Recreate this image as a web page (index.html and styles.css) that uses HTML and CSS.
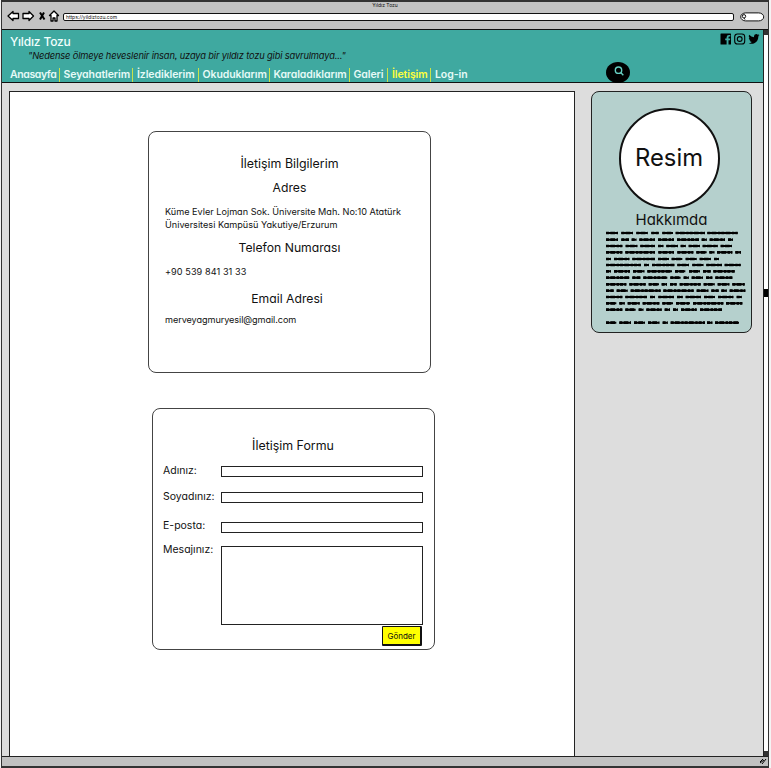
FILE: index.html
```
<!DOCTYPE html>
<html lang="tr">
<head>
<meta charset="utf-8">
<title>Yıldız Tozu</title>
<link rel="stylesheet" href="styles.css">
</head>
<body>
<div class="window">
  <div class="chrome">
    <div class="chrome-title">Yıldız Tozu</div>
    <div class="toolbar">
      <svg class="nav-icons" viewBox="0 0 54 14" width="54" height="14">
        <path d="M1 7 6 2.500V4.500h5.500v5H6v2Z M26.500 7 22 2.500V4.500h-6v5h6v2Z M42.500 6.500 47 2l4.500 4.500H50V12h-2V9h-2v3h-2V6.500Z"/>
        <path class="stop" d="M33 3.500 37.500 10.500M37 3.500 33 10.500"/>
      </svg>
      <div class="url">https://yildiztozu.com</div>
      <svg class="finder" viewBox="0 0 25 10" width="25" height="10">
        <rect x=".7" y=".9" width="23" height="8" rx="5"/>
        <circle cx="4" cy="4.300" r="1.700"/><path d="M4 6 5 7.500"/>
      </svg>
    </div>
  </div>
  <div class="view">
    <div class="page">
      <header class="header">
        <div class="brand">Yıldız Tozu</div>
        <div class="motto">"Nedense ölmeye heveslenir insan, uzaya bir yıldız tozu gibi savrulmaya..."</div>
        <nav class="menu">
          <a>Anasayfa</a><a>Seyahatlerim</a><a>İzlediklerim</a><a>Okuduklarım</a><a>Karaladıklarım</a><a>Galeri</a><a class="active">İletişim</a><a>Log-in</a>
        </nav>
        <svg class="social" viewBox="0 0 40 12" width="40" height="12">
          <path d="M1 .5h9.500q.5 0 .5.500v10q0 .5-.5.500H8.500V7.300H10l.2-1.800H8.500V4.400q0-.8.800-.8h1V2.100H9Q6.600 2.100 6.600 4.200v1.300H5.200v1.800h1.400v4.200H1q-.5 0-.5-.5V1Q.5.500 1 .5Z"/>
          <g class="line"><rect x="14.700" y="1" width="10" height="10" rx="2.800"/><circle cx="19.700" cy="6" r="2.400"/><path d="M22.500 3h.2"/></g>
          <path d="M39.500 2.300 38.300 3.500C38.500 8.500 34 12.500 28.600 10.200q2 0 3.200-1.200-1.700-.2-2.200-1.700h1Q28.800 6.700 28.800 5l1 .3Q28.100 3.900 29.200 1.800q2 2.300 4.800 2.500Q33.600 1.200 36.200 1q1 0 1.600.7l1.400-.5-.9 1.200Z"/>
        </svg>
        <svg class="search" viewBox="0 0 24 21" width="24" height="21">
          <ellipse cx="12" cy="10.500" rx="12" ry="10.500"/><circle cx="12.500" cy="8.200" r="3.200"/><path d="M14.800 10.600 17.300 13.200"/>
        </svg>
      </header>
      <div class="columns">
        <main class="main">
          <section class="card info">
            <h2>İletişim Bilgilerim</h2>
            <h3 class="h-address">Adres</h3>
            <p class="address">Küme Evler Lojman Sok. Üniversite Mah. No:10 Atatürk<br>Üniversitesi Kampüsü Yakutiye/Erzurum</p>
            <h3 class="h-phone">Telefon Numarası</h3>
            <p class="phone">+90 539 841 31 33</p>
            <h3 class="h-mail">Email Adresi</h3>
            <p class="mail">merveyagmuryesil@gmail.com</p>
          </section>
          <section class="card form">
            <h2>İletişim Formu</h2>
            <div class="row name"><label>Adınız:</label><i class="field"></i></div>
            <div class="row surname"><label>Soyadınız:</label><i class="field"></i></div>
            <div class="row post"><label>E-posta:</label><i class="field"></i></div>
            <div class="row message"><label>Mesajınız:</label><i class="field"></i></div>
            <button class="send">Gönder</button>
          </section>
        </main>
        <aside class="about">
          <div class="photo">Resim</div>
          <h2>Hakkımda</h2>
          <svg class="scribble" viewBox="48 76 420 282" width="140" height="94">
            <defs><path id="words" d="M48 82H84M94 82H129M139 82H173M184 82H206M217 82H249M257 82H345M352 82H443
            M48 102H84M94 102H117M125 102H139M148 102H195M204 102H252M261 102H327M335 102H350M359 102H405M414 102H429
            M48 121H97M107 121H142M151 121H195M204 121H220M229 121H264M272 121H287M296 121H330M338 121H383M392 121H426
            M48 140H97M106 140H195M205 140H252M262 140H310M319 140H350M358 140H373M381 140H427M436 140H453
            M48 160H63M72 160H118M127 160H195M204 160H237M245 160H277M287 160H320M329 160H363M372 160H387
            M48 178H153M162 178H177M186 178H253M262 178H297M307 178H340M349 178H396M404 178H452
            M48 197H63M72 197H120M129 197H163M172 197H246M255 197H286M297 197H330M339 197H362M370 197H434
            M48 216H118M127 216H151M160 216H232M241 216H272M281 216H296M305 216H339M348 216H367M376 216H427
            M48 236H109M118 236H167M176 236H207M215 236H231M240 236H260M269 236H332M341 236H374M383 236H418M427 236H464
            M48 255H71M80 255H113M122 255H212M220 255H311M320 255H355M364 255H386M394 255H410M419 255H466
            M48 274H97M106 274H171M180 274H195M205 274H252M261 274H278M287 274H333M342 274H375M384 274H430M440 274H455
            M48 293H79M88 293H104M113 293H149M158 293H208M217 293H249M258 293H300M309 293H400M408 293H457
            M48 312H97M106 312H137M146 312H160M169 312H215M224 312H240M249 312H264M273 312H320M330 312H396
            M48 351H79M88 351H123M132 351H165M174 351H208M218 351H233M242 351H345M351 351H367M375 351H447"/></defs>
            <use href="#words" class="body"/><use href="#words" class="bumps"/>
          </svg>
        </aside>
      </div>
    </div>
    <div class="scrollbar"><i class="up"></i><i class="thumb"></i><i class="down"></i></div>
  </div>
  <div class="status"><svg viewBox="0 0 8 8" width="8" height="8"><path d="M1 5 4 2M3 7 7 2M1 6 5 3"/></svg></div>
</div>
</body>
</html>
```
FILE: styles.css
```
* { box-sizing: border-box; }
body {
  margin: 0;
  background: #f4f4f4;
  color: #111;
  font-family: Inter, "Liberation Sans", sans-serif;
  font-feature-settings: "cv11", "ss03";
}
h2, h3, p { margin: 0; font-weight: 400; }
.window {
  width: 768px;
  height: 768px;
  margin-left: 1px;
  border: 1px solid #333;
  border-top-width: 2px;
  border-bottom-width: 2px;
  background: #c3c3c3;
  display: flex;
  flex-direction: column;
}
.chrome { height: 28px; border-bottom: 1px solid #111; }
.chrome-title { height: 7px; text-align: center; font-size: 5px; line-height: 7px; }
.toolbar { height: 14px; display: flex; align-items: center; padding-left: 5px; }
.nav-icons { fill: #fff; stroke: #000; stroke-width: 1.3; stroke-linejoin: round; }
.nav-icons .stop { stroke-width: 2; }
.url {
  width: 671px;
  height: 8px;
  margin: 2px 6px 0 2px;
  border: 1px solid #111;
  border-radius: 2px;
  background: #fff;
  font-size: 5px;
  line-height: 6px;
  padding-left: 2px;
}
.finder { margin-top: 2px; fill: #fff; stroke: #111; }
.view { flex: 1; display: flex; min-height: 0; }
.page { width: 761px; background: #ddd; }
.header {
  position: relative;
  height: 53px;
  background: #3fa9a0;
  border-bottom: 1px solid #111;
  padding: 4px 0 0 7px;
}
.brand { height: 16px; padding-left: 1px; font-size: 12px; line-height: 16px; font-weight: 500; letter-spacing: -.15px; color: #f1fffd; }
.motto { height: 13px; padding-left: 19px; font-size: 9.3px; line-height: 12px; font-style: italic; letter-spacing: -.15px; }
.menu { display: grid; grid-template-columns: 50.500px 73.500px 65.500px 71px 80px 38.500px 43px 50px; margin-top: 5px; }
.menu a { height: 14px; font-size: 10.500px; line-height: 13px; font-weight: 600; letter-spacing: -.08px; color: #e6faf7; white-space: nowrap; border-right: 1px solid #c9e24a; padding-left: 4px; }
.menu a:first-child { padding-left: 1px; letter-spacing: -.4px; }
.menu a:last-child { border: 0; }
.menu .active { color: #ffff3c; }
.social { position: absolute; left: 718px; top: 3px; }
.social .line { fill: none; stroke: #000; stroke-width: 1.1; }
.search { position: absolute; left: 604px; top: 32px; fill: #000; stroke-width: 1.4; }
.search circle, .search path { stroke: #66cfc2; }
.columns { display: flex; align-items: flex-start; padding: 8px 0 0 7px; }
.main { width: 566px; height: 665px; background: #fff; border: 1px solid #222; border-bottom: 0; padding: 39px 0 0 138px; }
.card { width: 283px; height: 242px; border: 1px solid #444; border-radius: 8px; }
.card h2, .card h3 { font-size: 12.2px; line-height: 16px; height: 16px; text-align: center; }
.card h2 { font-size: 12.400px; }
.info { padding: 24px 16px 0; }
.info p { font-size: 9.150px; line-height: 13px; white-space: nowrap; }
.info .h-address { margin-top: 8px; }
.info .address { margin-top: 9px; }
.info .h-phone { margin-top: 9px; }
.info .phone { margin-top: 9px; letter-spacing: .07px; }
.info .h-mail { margin-top: 13px; padding-right: 5px; }
.info .mail { margin-top: 6px; letter-spacing: -.08px; }
.form { margin: 35px 0 0 4px; padding: 29px 11px 0 10px; }
.row { display: flex; align-items: center; font-size: 10.500px; }
.row label { width: 58px; flex: none; line-height: 14px; white-space: nowrap; }
.field { display: block; width: 202px; height: 11px; border: 1px solid #222; }
.name { margin-top: 9px; height: 16px; }
.surname { margin-top: 10px; height: 16px; }
.post { margin-top: 14px; height: 16px; }
.post label { padding-bottom: 3px; }
.message { margin-top: 8px; align-items: flex-start; }
.message .field { height: 79px; margin-top: 3px; }
.send {
  display: block;
  margin: 1px 1px 0 auto;
  width: 40px;
  height: 20px;
  padding: 0;
  border: 1px solid #111;
  border-width: 1px 2px 2px 1px;
  border-radius: 1px;
  background: #ff0;
  color: #111;
  font: 8px/16px Inter, sans-serif;
}
.about {
  width: 161px;
  height: 242px;
  margin-left: 16px;
  border: 1px solid #222;
  border-radius: 8px;
  background: #b5d0cd;
  display: flex;
  flex-direction: column;
  align-items: center;
  padding-top: 16px;
}
.photo { width: 101px; height: 101px; border: 2px solid #111; border-radius: 50%; background: #fff; margin-right: 5px; font-size: 23.8px; line-height: 95px; text-align: center; }
.about h2 { font-size: 15px; line-height: 22px; height: 22px; }
.scribble { fill: none; stroke: #000; margin-left: 8px; }
.scribble .body { stroke-width: 6; }
.scribble .bumps { stroke-width: 8; stroke-dasharray: 9 4 14 5 7 3; }
.scrollbar { width: 5px; background: #fff; border-left: 1px solid #222; display: flex; flex-direction: column; justify-content: space-between; }
.scrollbar i { display: block; height: 5px; background: #333; }
.scrollbar .thumb { height: 8px; margin-bottom: 200px; background: #000; }
.status { height: 10px; border-top: 1px solid #222; background: #c1c1c1; text-align: right; line-height: 8px; padding-right: 1px; }
.status svg { display: block; margin-left: auto; }
.status path { stroke: #000; }
```
